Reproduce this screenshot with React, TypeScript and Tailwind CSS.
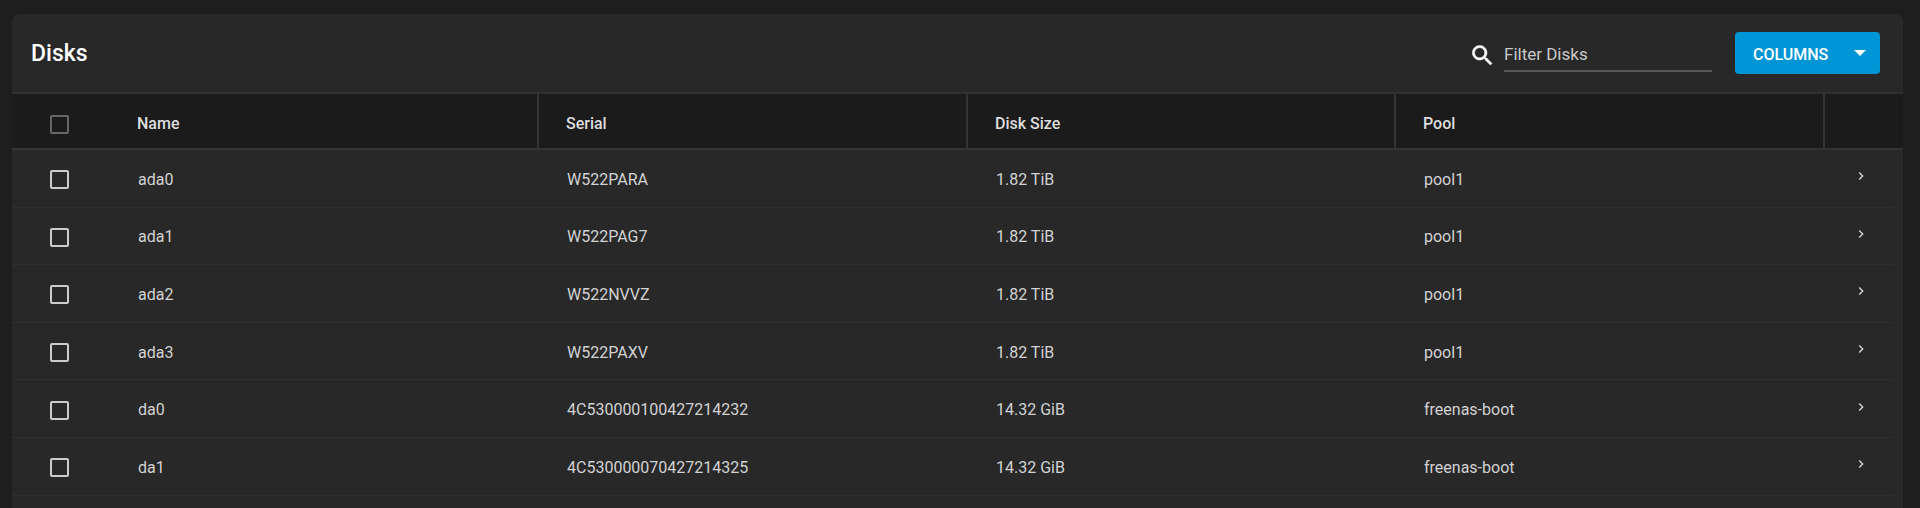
const disks = [
  { name: "ada0", serial: "W522PARA", size: "1.82 TiB", pool: "pool1" },
  { name: "ada1", serial: "W522PAG7", size: "1.82 TiB", pool: "pool1" },
  { name: "ada2", serial: "W522NVVZ", size: "1.82 TiB", pool: "pool1" },
  { name: "ada3", serial: "W522PAXV", size: "1.82 TiB", pool: "pool1" },
  { name: "da0", serial: "4C530000100427214232", size: "14.32 GiB", pool: "freenas-boot" },
  { name: "da1", serial: "4C530000070427214325", size: "14.32 GiB", pool: "freenas-boot" },
];

function SearchIcon() {
  return (
    <svg className="mt-[5px]" width="27" height="27" viewBox="0 0 24 24" fill="#ffffff" stroke="#ffffff" strokeWidth="0.4">
      <path d="M15.5 14h-.79l-.28-.27C15.41 12.59 16 11.11 16 9.5 16 5.91 13.09 3 9.5 3S3 5.91 3 9.5 5.91 16 9.5 16c1.61 0 3.09-.59 4.23-1.57l.27.28v.79l5 4.99L20.49 19l-4.99-5zm-6 0C7.01 14 5 11.99 5 9.5S7.01 5 9.5 5 14 7.01 14 9.5 11.99 14 9.5 14z" />
    </svg>
  );
}

function ChevronIcon() {
  return (
    <svg width="16" height="16" viewBox="0 0 24 24" fill="#d8d8d8">
      <path d="M8.59 16.59L13.17 12 8.59 7.41 10 6l6 6-6 6z" />
    </svg>
  );
}

function HeaderCell({ label }: { label: string }) {
  return (
    <div className="flex items-center pl-[27px] pt-[6px] border-r-2 border-[#333333]">
      {label}
    </div>
  );
}

export default function App() {
  return (
    <div className="h-[508px] overflow-hidden bg-[#1e1e1e] pt-[14px] pl-[12px] pr-[17px] flex flex-col font-['Roboto',sans-serif]">
      <div className="flex-1 bg-[#282828] rounded-t-[8px]">
        {/* Title bar */}
        <div className="h-[80px] flex items-center justify-between pl-[19px] pr-[23px] border-b-2 border-[#303030]">
          <h1 className="text-[23px] font-medium text-white pt-[2px]">Disks</h1>
          <div className="flex items-center">
            <SearchIcon />
            <div className="w-[208px] h-[39px] ml-[8px] mr-[23px] mt-[-2px] flex items-center border-b-2 border-[#555555] text-[17px] text-[#c8c8c8]">
              <span className="pt-[8px]">Filter Disks</span>
            </div>
            <button className="w-[145px] h-[42px] bg-[#0095d5] rounded-[4px] flex items-center pl-[18px] pt-[4px] text-[16px] font-medium text-white">
              COLUMNS
              <span className="ml-[26px] w-0 h-0 mb-[4px] border-x-[6px] border-x-transparent border-t-[6px] border-t-white" />
            </button>
          </div>
        </div>

        {/* Column headers */}
        <div className="h-[56px] grid grid-cols-[527px_429px_428px_429px_1fr] bg-[#1b1b1b] border-b-2 border-[#333333] text-[16px] font-medium text-[#dedede]">
          <div className="flex items-center pl-[38px] pt-[6px] border-r-2 border-[#333333]">
            <span className="w-[19px] h-[19px] border-2 border-[#666666] rounded-[2px]" />
            <span className="ml-[68px]">Name</span>
          </div>
          <HeaderCell label="Serial" />
          <HeaderCell label="Disk Size" />
          <HeaderCell label="Pool" />
          <div />
        </div>

        {/* Rows */}
        {disks.map((disk) => (
          <div
            key={disk.name}
            className="h-[57.6px] mr-[9px] grid grid-cols-[527px_429px_428px_429px_1fr] border-b border-[#303030] text-[16px] text-[#d2d2d2]"
          >
            <div className="flex items-center pl-[38px] pt-[3px]">
              <span className="w-[19px] h-[19px] border-2 border-[#cccccc] rounded-[2px]" />
              <span className="ml-[69px]">{disk.name}</span>
            </div>
            <div className="flex items-center pl-[28px] pt-[3px]">{disk.serial}</div>
            <div className="flex items-center pl-[28px] pt-[3px]">{disk.size}</div>
            <div className="flex items-center pl-[28px] pt-[3px]">{disk.pool}</div>
            <div className="flex items-center pl-[28px] pb-[4px]">
              <ChevronIcon />
            </div>
          </div>
        ))}
      </div>
    </div>
  );
}
